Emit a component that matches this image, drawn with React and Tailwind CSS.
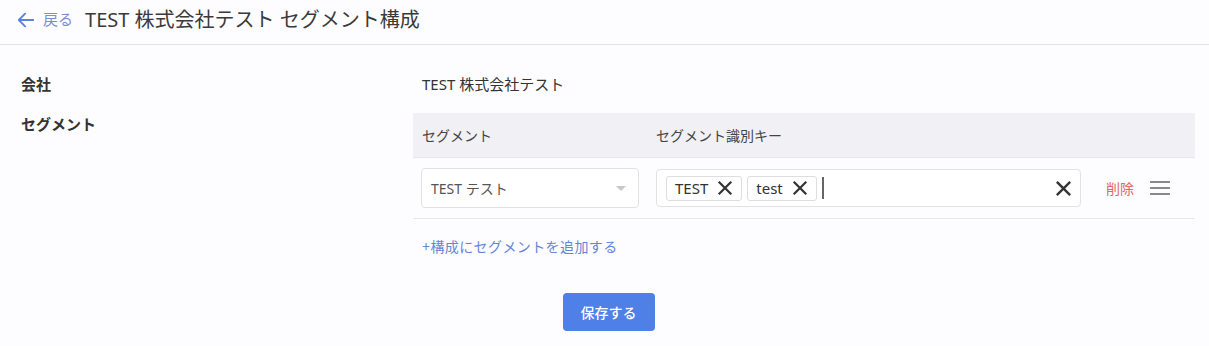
import React from "react";

function XIcon({ className = "" }) {
  return (
    <svg viewBox="0 0 16 16" className={className} fill="none" stroke="currentColor" strokeWidth="2.2" strokeLinecap="square">
      <path d="M2.5 2.5l11 11M13.5 2.5l-11 11" />
    </svg>
  );
}

function Tag({ label }) {
  return (
    <span className="flex h-[25px] items-center gap-[9px] rounded-[3px] border border-[#dedde2] bg-white pl-[8px] pr-[8px] text-[15px] text-[#333]">
      {label}
      <XIcon className="h-[16px] w-[16px] text-[#333]" />
    </span>
  );
}

export default function App() {
  return (
    <div className="min-h-[346px] bg-[#fdfcfe] font-['Noto_Sans','Noto_Sans_CJK_JP',sans-serif] text-[#333]">
      {/* ヘッダー */}
      <div className="flex h-[45px] items-center border-b border-[#e4e3e8] pb-[5px] pl-[17px]">
        <svg viewBox="0 0 20 20" className="h-[18px] w-[18px] text-[#5a82db]" fill="none" stroke="currentColor" strokeWidth="2" strokeLinecap="round" strokeLinejoin="round">
          <path d="M18 10H2M9 3l-7 7 7 7" />
        </svg>
        <span className="ml-[8px] text-[15px] text-[#7c8fcf]">戻る</span>
        <h1 className="ml-[12px] text-[20px] text-[#3a3a3a]">TEST 株式会社テスト セグメント構成</h1>
      </div>

      <div className="flex pt-[27px]">
        <div className="w-[413px] pl-[21px] text-[15px] font-bold text-[#333]">
          <div className="flex h-[24px] items-center">会社</div>
          <div className="mt-[16px] flex h-[24px] items-center">セグメント</div>
        </div>

        <div className="w-[782px]">
          <div className="flex h-[24px] items-center pl-[9px] text-[15px] text-[#333]">TEST 株式会社テスト</div>

          {/* テーブル */}
          <div className="mt-[17px] flex h-[44px] items-center bg-[#f1f0f4] text-[14px] text-[#444]">
            <div className="w-[243px] pl-[9px]">セグメント</div>
            <div>セグメント識別キー</div>
          </div>
          <div className="flex h-[62px] items-center border-y border-[#e8e7ec]">
            <div className="w-[243px] px-[8px]">
              <div className="flex h-[40px] w-[218px] items-center justify-between rounded-[4px] border border-[#e2e1e6] bg-white pl-[9px] pr-[12px] text-[14px] text-[#555]">
                <span>TEST テスト</span>
                <span className="h-0 w-0 border-x-[5px] border-t-[5px] border-x-transparent border-t-[#c8c8cc]" />
              </div>
            </div>
            <div className="flex h-[38px] w-[425px] items-center gap-[5px] rounded-[4px] border border-[#e2e1e6] bg-white pl-[9px] pr-[8px]">
              <Tag label="TEST" />
              <Tag label="test" />
              <span className="h-[22px] w-[2px] bg-[#666]" />
              <span className="flex-1" />
              <XIcon className="h-[17px] w-[17px] text-[#333]" />
            </div>
            <span className="ml-[25px] text-[14px] text-[#e06767]">削除</span>
            <svg viewBox="0 0 20 14" className="ml-[16px] h-[14px] w-[20px] text-[#888]" fill="none" stroke="currentColor" strokeWidth="2">
              <path d="M0 1h20M0 7h20M0 13h20" />
            </svg>
          </div>

          <div className="mt-[17px] pl-[9px] text-[14px] tracking-[0.4px] text-[#6486d9]">+構成にセグメントを追加する</div>
        </div>
      </div>

      <div className="flex justify-center pl-[8px] pt-[36px]">
        <button className="h-[38px] w-[92px] rounded-[4px] bg-[#4f80e8] text-[14px] font-medium text-white">保存する</button>
      </div>
    </div>
  );
}
